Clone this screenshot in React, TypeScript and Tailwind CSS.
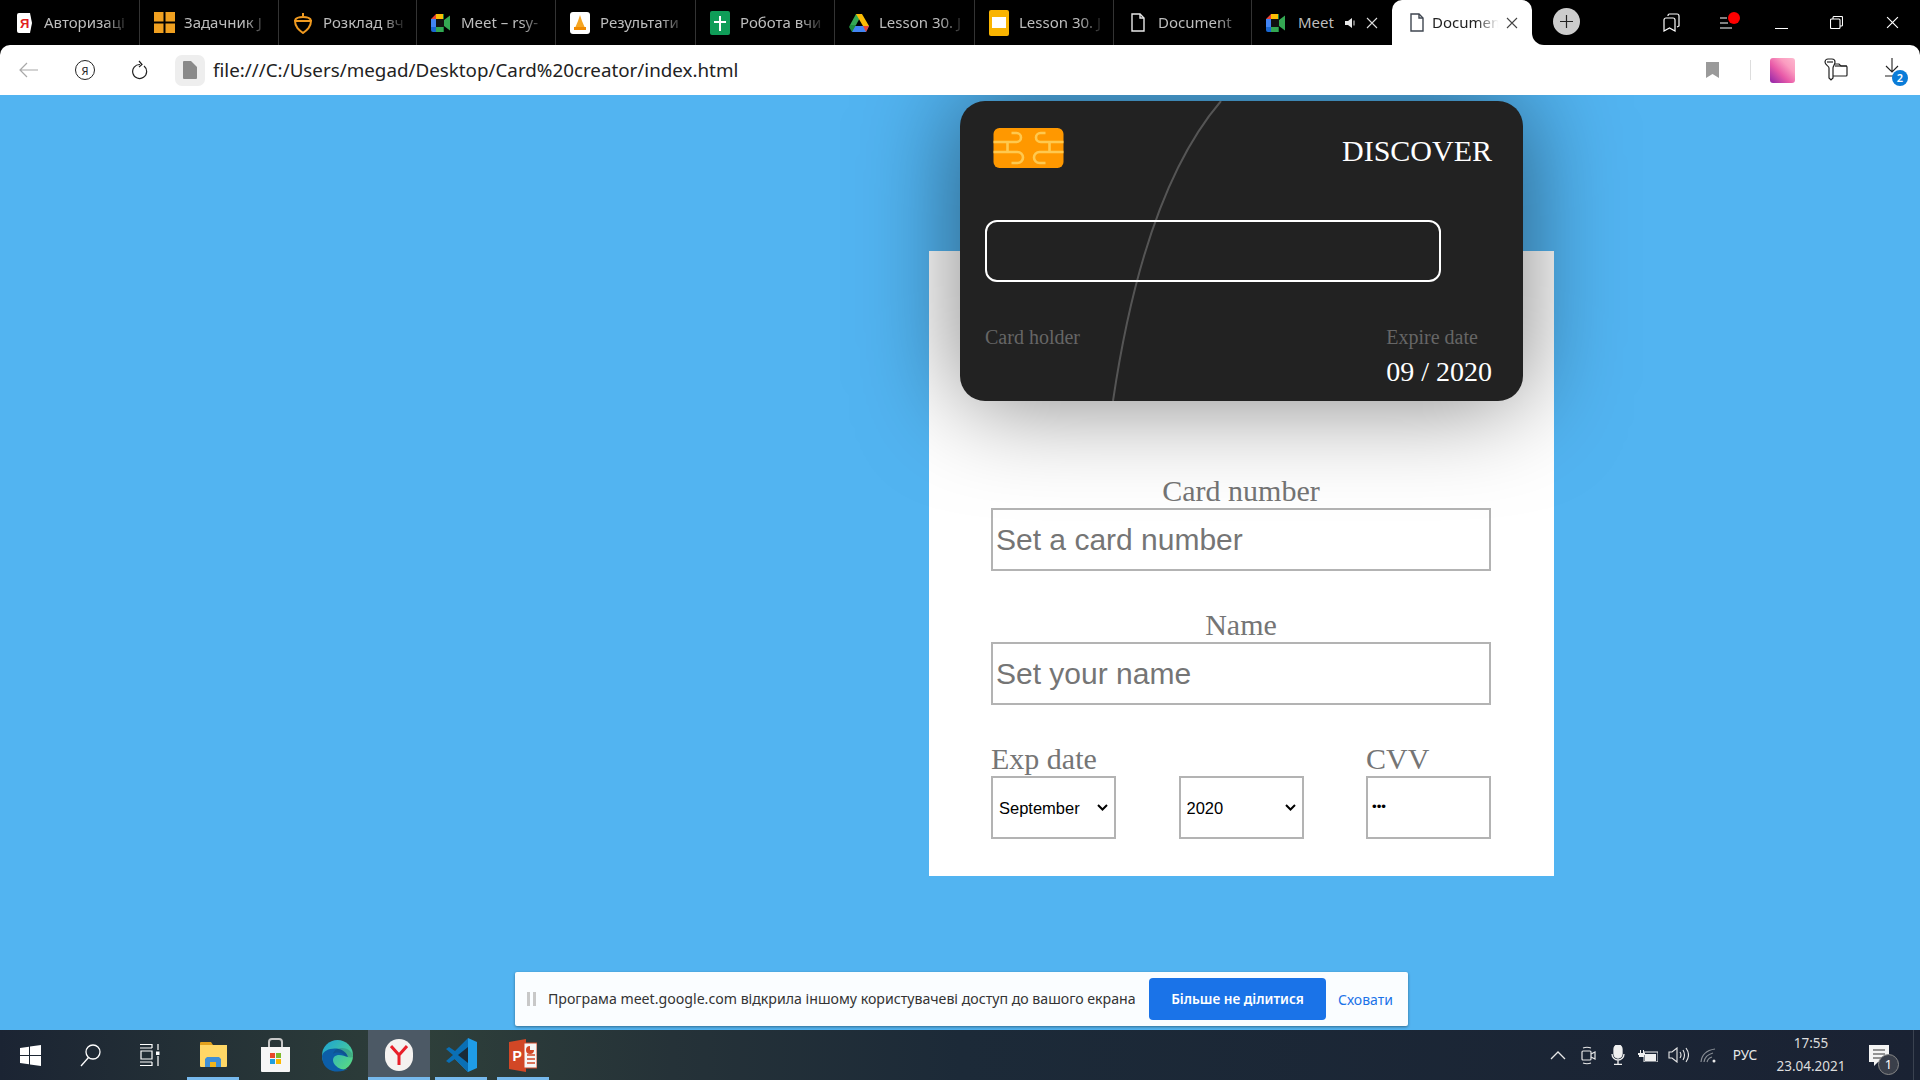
import type { ReactNode } from 'react'

const MeetIcon = () => (
  <svg width="20" height="18" viewBox="0 0 20 18">
    <path d="M0 5 5 0h8v5H5v8H0z" fill="#ea4335" />
    <path d="M5 0h8v5H5z" fill="#fbbc04" />
    <path d="M0 5h5v8H0z" fill="#4285f4" />
    <path d="M0 13h5v5H2a2 2 0 0 1-2-2z" fill="#1967d2" />
    <path d="M5 13h8v5H5z" fill="#34a853" />
    <path d="M13 6l6-4.500v15l-6-4.500z" fill="#34a853" />
    <path d="M13 0v18h-1V0z" fill="#188038" />
    <path d="M5 5h8v8H5z" fill="#111" />
  </svg>
)

const DocIcon = ({ color = '#e8e8e8' }: { color?: string }) => (
  <svg width="14" height="19" viewBox="0 0 14 19" fill="none" stroke={color} strokeWidth="1.400">
    <path d="M1 1h8l4 4v13H1z" />
    <path d="M9 1v4h4" />
  </svg>
)

const CloseIcon = ({ color = '#ddd', size = 12 }: { color?: string; size?: number }) => (
  <svg width={size} height={size} viewBox="0 0 12 12" stroke={color} strokeWidth="1.100">
    <path d="M1 1l10 10M11 1L1 11" />
  </svg>
)

const Chevron = () => (
  <svg className="absolute right-[8px] top-[28px] pointer-events-none" width="11" height="7" viewBox="0 0 11 7" fill="none" stroke="#000" strokeWidth="2">
    <path d="M1 1l4.500 4.500L10 1" />
  </svg>
)

type TabProps = {
  icon: ReactNode
  title: string
  width?: string
  end?: ReactNode
}

function Tab({ icon, title, width = 'w-[139px]', end }: TabProps) {
  return (
    <div className={`${width} h-[45px] flex items-center border-r border-[#333] shrink-0 pl-[13px] pr-[8px]`}>
      <div className="w-[22px] flex justify-center shrink-0">{icon}</div>
      <span className="ml-[9px] flex-1 overflow-hidden whitespace-nowrap text-[15px] text-[#bdbdbd] [mask-image:linear-gradient(to_right,black_70%,transparent)]">
        {title}
      </span>
      {end}
    </div>
  )
}

function TabBar() {
  return (
    <div className="h-[45px] bg-black flex items-start shrink-0 [font-family:'Noto_Sans',sans-serif]">
      <Tab
        title="Авторизаці"
        width="w-[140px]"
        icon={
          <svg width="15" height="20" viewBox="0 0 15 20">
            <path d="M0 2a2 2 0 0 1 2-2h11l2 10-2 10H2a2 2 0 0 1-2-2z" fill="#fff" />
            <text x="3" y="15" fontSize="13" fontFamily="Liberation Sans" fontWeight="700" fill="#e02020">Я</text>
          </svg>
        }
      />
      <Tab
        title="Задачник J"
        icon={
          <svg width="21" height="21" viewBox="0 0 21 21" fill="#f0a020">
            <rect width="9.500" height="9.500" />
            <rect x="11.500" width="9.500" height="9.500" />
            <rect y="11.500" width="9.500" height="9.500" />
            <rect x="11.500" y="11.500" width="9.500" height="9.500" />
          </svg>
        }
      />
      <Tab
        title="Розклад вч"
        width="w-[138px]"
        icon={
          <svg width="20" height="22" viewBox="0 0 20 22" fill="none" stroke="#f09a20" strokeWidth="2">
            <path d="M2 8c2-4 14-4 16 0" />
            <path d="M2 9h16c0 6-4 9-8 12-4-3-8-6-8-12z" />
            <path d="M10 1v3" />
          </svg>
        }
      />
      <Tab title="Meet – rsy-" icon={<MeetIcon />} />
      <Tab
        title="Результати"
        width="w-[140px]"
        icon={
          <svg width="20" height="22" viewBox="0 0 20 22">
            <rect width="20" height="22" rx="3" fill="#fff" />
            <path d="M10 3l2 6 3 7H5l3-7z" fill="#f5a623" />
            <rect x="4" y="15" width="12" height="3" fill="#f08a00" />
          </svg>
        }
      />
      <Tab
        title="Робота вчи"
        icon={
          <svg width="20" height="24" viewBox="0 0 20 24">
            <rect width="20" height="24" rx="2" fill="#0f9d58" />
            <path d="M9 5h2v5h5v2h-5v8H9v-8H4v-2h5z" fill="#fff" />
          </svg>
        }
      />
      <Tab
        title="Lesson 30. J"
        width="w-[140px]"
        icon={
          <svg width="20" height="18" viewBox="0 0 20 18">
            <path d="M7 0h6l-6 11H1z" fill="#34a853" transform="translate(0 0)" />
            <path d="M7 0h6l7 12h-6z" fill="#fbbc04" />
            <path d="M4 12h16l-3 6H3z" fill="#4285f4" />
            <path d="M14 12h6l-3 6z" fill="#ea4335" />
            <path d="M1 11h6l-4 7-3-5z" fill="#1e8e3e" />
          </svg>
        }
      />
      <Tab
        title="Lesson 30. J"
        icon={
          <svg width="20" height="26" viewBox="0 0 20 26">
            <rect width="20" height="26" rx="2" fill="#f9b400" />
            <rect x="3" y="7" width="14" height="11" fill="#fff" />
          </svg>
        }
      />
      <Tab title="Document" width="w-[138px]" icon={<DocIcon />} />
      <div className="w-[140px] h-[45px] flex items-center shrink-0 pl-[13px] pr-[14px] rounded-br-[10px] bg-black">
        <div className="w-[22px] flex justify-center shrink-0">
          <MeetIcon />
        </div>
        <span className="ml-[11px] flex-1 whitespace-nowrap text-[15px] text-[#bdbdbd]">Meet</span>
        <svg className="ml-[6px]" width="12" height="12" viewBox="0 0 12 12" fill="#e8e8e8">
          <path d="M0 4h3l4-3v10L3 8H0z" />
          <path d="M8.500 3.500v5h1v-5z" />
        </svg>
        <div className="ml-[9px]">
          <CloseIcon />
        </div>
      </div>

      <div className="relative w-[140px] h-[45px] bg-white rounded-t-[10px] flex items-center shrink-0 pl-[18px] pr-[14px]">
        <DocIcon color="#3f4650" />
        <span className="ml-[8px] flex-1 overflow-hidden whitespace-nowrap text-[15px] text-[#222] [mask-image:linear-gradient(to_right,black_60%,transparent_90%)]">
          Document
        </span>
        <CloseIcon color="#444" />
        <div className="absolute -right-[12px] bottom-0 w-[12px] h-[12px] bg-white">
          <div className="w-full h-full bg-black rounded-bl-[12px]" />
        </div>
      </div>

      <div className="ml-[21px] mt-[8px] w-[27px] h-[27px] rounded-full bg-[#cccccc] flex items-center justify-center">
        <svg width="13" height="13" viewBox="0 0 13 13" stroke="#222" strokeWidth="1.200">
          <path d="M6.500 0v13M0 6.500h13" />
        </svg>
      </div>

      <div className="ml-auto flex h-[45px]">
        <div className="w-[55px] flex items-center justify-center">
          <svg width="17" height="19" viewBox="0 0 17 19" fill="none" stroke="#fff" strokeWidth="1.200">
            <path d="M1 18V7a2 2 0 0 1 2-2h7a2 2 0 0 1 2 2v11l-5.500-3z" />
            <path d="M5 3V2.500A1.500 1.500 0 0 1 6.500 1H14a2 2 0 0 1 2 2v10l-2 1" />
          </svg>
        </div>
        <div className="relative w-[55px] flex items-center justify-center">
          <svg width="13" height="12" viewBox="0 0 13 12" stroke="#fff" strokeWidth="1.100">
            <path d="M0 1h7M0 6h8M0 11h12" />
          </svg>
          <div className="absolute left-[29px] top-[12px] w-[12px] h-[12px] rounded-full bg-[#ff0000]" />
        </div>
        <div className="w-[55px] flex items-center justify-center pt-[12px]">
          <div className="w-[13px] h-px bg-white" />
        </div>
        <div className="w-[55px] flex items-center justify-center">
          <svg width="13" height="13" viewBox="0 0 13 13" fill="none" stroke="#fff" strokeWidth="1.100">
            <rect x="0.500" y="3" width="9.500" height="9.500" rx="1" />
            <path d="M3 3V1.500a1 1 0 0 1 1-1h7.500a1 1 0 0 1 1 1V9a1 1 0 0 1-1 1H10" />
          </svg>
        </div>
        <div className="w-[56px] flex items-center justify-center">
          <CloseIcon color="#fff" size={13} />
        </div>
      </div>
    </div>
  )
}

function Toolbar() {
  return (
    <div className="h-[50px] bg-black shrink-0 relative z-10">
      <div className="h-full bg-white rounded-t-[10px] flex items-center [font-family:'Noto_Sans',sans-serif]">
        <div className="w-[57px] flex justify-center">
          <svg width="19" height="16" viewBox="0 0 19 16" fill="none" stroke="#a8a8a8" strokeWidth="1.200">
            <path d="M19 8H1M8 1 1 8l7 7" />
          </svg>
        </div>
        <div className="w-[56px] flex justify-center">
          <div className="w-[20px] h-[20px] rounded-full border border-[#222] flex items-center justify-center text-[11px] leading-none text-[#222]">
            Я
          </div>
        </div>
        <div className="w-[54px] flex justify-center">
          <svg width="16" height="20" viewBox="0 0 16 20" fill="none" stroke="#222" strokeWidth="1.200">
            <path d="M12 6a7 7 0 1 1-4-1.500" />
            <path d="M7 1l3 3.500L7 7" />
          </svg>
        </div>
        <div className="ml-[8px] w-[30px] h-[31px] rounded-[7px] bg-[#eeeeee] flex items-center justify-center">
          <svg width="14" height="18" viewBox="0 0 14 18">
            <path d="M0 1a1 1 0 0 1 1-1h7l6 6v11a1 1 0 0 1-1 1H1a1 1 0 0 1-1-1z" fill="#8a8a8a" />
          </svg>
        </div>
        <span className="ml-[8px] pt-[1px] text-[18.800px] text-[#222] whitespace-nowrap">
          file:///C:/Users/megad/Desktop/Card%20creator/index.html
        </span>
        <div className="ml-auto flex items-center pr-[15px]">
          <svg width="13" height="16" viewBox="0 0 13 16" fill="#9a9a9a">
            <path d="M0 0h13v16l-6.500-4L0 16z" />
          </svg>
          <div className="ml-[31px] w-px h-[20px] bg-[#dddddd]" />
          <div className="ml-[19px] w-[25px] h-[25px] rounded-[3px] bg-[linear-gradient(to_top_right,#8e24aa_0%,#e85aa8_40%,#fb9cc0_70%,#fdb8cf_100%)]" />
          <svg className="ml-[29px]" width="24" height="24" viewBox="0 0 24 24" fill="none" stroke="#222" strokeWidth="1.200">
            <path d="M1 4a3 3 0 0 1 3-3h4a3 3 0 0 1 3 3c0 3-2 4-2 6v10l-2 2-2-2V10C5 8 1 7 1 4z" />
            <path d="M3 4h6" />
            <path d="M11 6h4l2 2h5a1 1 0 0 1 1 1v8a1 1 0 0 1-1 1H9" />
            <path d="M11 8h12" />
          </svg>
          <div className="relative ml-[37px] w-[20px] h-[24px]">
            <svg width="16" height="20" viewBox="0 0 16 20" fill="none" stroke="#222" strokeWidth="1.100">
              <path d="M7 0v14M1 8l6 6 6-6M0 18h10" />
            </svg>
            <div className="absolute left-[7px] top-[12px] w-[16px] h-[16px] rounded-full bg-[#0a7cd8] text-white text-[11px] font-semibold leading-[16px] text-center">
              2
            </div>
          </div>
        </div>
      </div>
    </div>
  )
}

function Chip() {
  return (
    <svg className="ml-[8px]" width="71" height="40" viewBox="0 0 70 40" fill="none">
      <rect width="70" height="40" rx="6" fill="#ff9800" />
      <g stroke="#ffc94f" strokeWidth="2.600">
        <path d="M18 5h5a4.500 4.500 0 0 1 0 9H0M0 24h24a5.500 5.500 0 0 1 0 11h-6M14 14v10" />
        <path d="M52 5h-5a4.500 4.500 0 0 0 0 9h23M70 24H46a5.500 5.500 0 0 0 0 11h6M56 14v10" />
      </g>
    </svg>
  )
}

function CreditCard() {
  return (
    <div className="absolute left-[31px] -top-[150px] w-[563px] h-[300px] rounded-[25px] bg-[#222222] shadow-[0_0_100px_rgba(0,0,0,0.5)] overflow-hidden pt-[27px] pl-[25px] pr-[31px]">
      <svg className="absolute inset-0" width="563" height="300" fill="none">
        <path d="M261 0Q184 90 153 300" stroke="#555555" strokeWidth="2" />
      </svg>
      <div className="relative flex justify-between h-[40px]">
        <Chip />
        <span className="mt-[6px] text-[30px] text-white">DISCOVER</span>
      </div>
      <div className="relative mt-[52px] w-[456px] h-[62px] rounded-[12px] border-2 border-white" />
      <div className="relative mt-[44px] flex justify-between">
        <span className="text-[20px] text-[#666666]">Card holder</span>
        <div className="flex flex-col">
          <span className="text-[20px] text-[#666666]">Expire date</span>
          <span className="mt-[7px] text-[28px] text-white">09 / 2020</span>
        </div>
      </div>
    </div>
  )
}

function FormPanel() {
  const boxClass = 'w-full h-[63px] border-2 border-[#b3b3b3] bg-white block'
  const labelClass = 'text-[30px] text-[#757575]'
  const selectClass = `${boxClass} appearance-none pl-[6px] text-[16.500px] text-black [font-family:'Liberation_Sans',sans-serif]`

  return (
    <div className="relative ml-[929px] mt-[156px] w-[625px] h-[625px] bg-white pl-[62px] pr-[63px] pt-[223px] flex flex-col gap-[37px] leading-[normal] [font-family:'Liberation_Serif',serif]">
      <CreditCard />
      <div className="flex flex-col items-center">
        <label className={labelClass}>Card number</label>
        <input
          placeholder="Set a card number"
          className={`${boxClass} px-[3px] text-[30px] [font-family:'Liberation_Sans',sans-serif] placeholder:text-[#757575]`}
        />
      </div>
      <div className="flex flex-col items-center">
        <label className={labelClass}>Name</label>
        <input
          placeholder="Set your name"
          className={`${boxClass} px-[3px] text-[30px] [font-family:'Liberation_Sans',sans-serif] placeholder:text-[#757575]`}
        />
      </div>
      <div className="flex justify-between">
        <div className="flex flex-col w-[125px]">
          <label className={labelClass}>Exp date</label>
          <div className="relative">
            <select defaultValue="September" className={selectClass}>
              <option>August</option>
              <option>September</option>
              <option>October</option>
            </select>
            <Chevron />
          </div>
        </div>
        <div className="flex flex-col justify-end w-[125px]">
          <div className="relative">
            <select defaultValue="2020" className={selectClass}>
              <option>2020</option>
              <option>2021</option>
            </select>
            <Chevron />
          </div>
        </div>
        <div className="flex flex-col w-[125px]">
          <label className={labelClass}>CVV</label>
          <input
            type="password"
            defaultValue="123"
            className={`${boxClass} px-[4px] pb-[3px] text-[13.330px] text-black [font-family:'Liberation_Sans',sans-serif]`}
          />
        </div>
      </div>
    </div>
  )
}

function ShareBar() {
  return (
    <div className="absolute bottom-[4px] left-[515px] w-[893px] h-[54px] bg-[#fafdff] rounded-[2px] shadow-[0_1px_3px_rgba(0,0,0,0.4)] flex items-center pl-[12px] [font-family:'Noto_Sans',sans-serif]">
      <div className="flex gap-[3px]">
        <div className="w-[3px] h-[14px] bg-[#c8c8c8]" />
        <div className="w-[3px] h-[14px] bg-[#c8c8c8]" />
      </div>
      <span className="ml-[12px] w-[588px] text-[14.150px] text-[#333] whitespace-nowrap">
        Програма meet.google.com відкрила іншому користувачеві доступ до вашого екрана
      </span>
      <button className="ml-[13px] w-[177px] h-[42px] rounded-[4px] bg-[#1a73e8] text-white text-[13.600px] font-semibold">
        Більше не ділитися
      </button>
      <span className="ml-[12px] text-[14px] text-[#1a73e8]">Сховати</span>
    </div>
  )
}

function TaskSlot({ children, active, open }: { children: ReactNode; active?: boolean; open?: boolean }) {
  return (
    <div className={`relative w-[62px] h-full flex items-center justify-center ${active ? 'bg-[#4c5965]' : ''}`}>
      {children}
      {open && (
        <div className={`absolute bottom-0 h-[3px] bg-[#76b9ed] ${active ? 'inset-x-0' : 'inset-x-[5px]'}`} />
      )}
    </div>
  )
}

function Taskbar() {
  return (
    <div className="h-[50px] shrink-0 flex items-center bg-[linear-gradient(to_right,#1b2433_0%,#2e3f3a_22%,#253238_35%,#1c2a38_50%,#1a2233_100%)] text-[#e4e4e4] [font-family:'Noto_Sans',sans-serif]">
      <div className="w-[60px] h-full flex items-center justify-center">
        <svg width="21" height="21" viewBox="0 0 21 21" fill="#fff">
          <path d="M0 3l9-1.300V10H0zM10 1.500 21 0v10H10zM0 11h9v8.300L0 18zM10 11h11v10l-11-1.500z" />
        </svg>
      </div>
      <div className="w-[60px] h-full flex items-center justify-center">
        <svg width="21" height="24" viewBox="0 0 21 24" fill="none" stroke="#fff" strokeWidth="1.300">
          <circle cx="13" cy="9" r="7" />
          <path d="M8.500 14.500 1 23" />
        </svg>
      </div>
      <div className="w-[60px] h-full flex items-center justify-center">
        <svg width="20" height="22" viewBox="0 0 20 22" fill="none" stroke="#fff" strokeWidth="1.200">
          <path d="M0 .5h12M0 21.500h12M0 4h12M0 18h12M12 0v4M12 18v4M1 7h11v8H1zM18 0v6M18 12v10" />
          <rect x="16" y="7.500" width="3.500" height="3.500" fill="#fff" stroke="none" />
        </svg>
      </div>
      <div className="ml-[2px] flex h-full">
        <TaskSlot open>
          <svg width="27" height="26" viewBox="0 0 27 26">
            <path d="M0 1a1 1 0 0 1 1-1h10l2 3H0z" fill="#e2a11c" />
            <path d="M0 3h27v21a1 1 0 0 1-1 1H1a1 1 0 0 1-1-1z" fill="#ffd766" />
            <path d="M5 25v-8l2-2h12l2 2v8h-5v-5h-6v5z" fill="#3f8fd6" />
            <rect x="10" y="20" width="6" height="5" fill="#f2b51b" />
          </svg>
        </TaskSlot>
        <TaskSlot>
          <svg width="29" height="34" viewBox="0 0 29 34">
            <path d="M8 9V4a3 3 0 0 1 3-3h7a3 3 0 0 1 3 3v5" fill="none" stroke="#c8c8c8" strokeWidth="2" />
            <path d="M0 9h29v24a1 1 0 0 1-1 1H1a1 1 0 0 1-1-1z" fill="#f6f6f6" />
            <rect x="9" y="15" width="5" height="5" fill="#e8472b" />
            <rect x="15" y="15" width="5" height="5" fill="#7db92d" />
            <rect x="9" y="21" width="5" height="5" fill="#1f9fe0" />
            <rect x="15" y="21" width="5" height="5" fill="#fbb700" />
          </svg>
        </TaskSlot>
        <TaskSlot>
          <svg width="31" height="33" viewBox="0 0 31 33">
            <defs>
              <linearGradient id="edgeTop" x1="0" y1="0" x2="1" y2="1">
                <stop offset="0" stopColor="#1aa0d8" />
                <stop offset="1" stopColor="#5fe07a" />
              </linearGradient>
            </defs>
            <circle cx="15.500" cy="16.500" r="15.500" fill="url(#edgeTop)" />
            <path d="M0 17C2 8 22 6 26 18c-4-1-10-4-14 0-3 4 1 10 7 12 4 1 7 0 8-1-7 6-27 6-27-12z" fill="#0c5ea8" />
            <path d="M31 18c0-5-5-9-11-9-4 0-8 2-9 6 3-2 8-2 11 1 2 2 6 3 9 2z" fill="#1f2e3a" opacity="0.2" />
          </svg>
        </TaskSlot>
        <TaskSlot active open>
          <div className="w-[28px] h-[32px] rounded-full bg-[#f4f2f0] flex items-center justify-center">
            <svg width="18" height="20" viewBox="0 0 18 20" fill="none" stroke="#e8202a" strokeWidth="3">
              <path d="M1 1l8 9 8-9M9 10v10" />
            </svg>
          </div>
        </TaskSlot>
        <TaskSlot open>
          <svg width="31" height="34" viewBox="0 0 31 34">
            <path d="M22 0l9 4v26l-9 4-13-13 13-9z" fill="#1f9ce8" />
            <path d="M22 0v34L9 21l-6 4-3-2 7-6-7-6 3-2 6 4z" fill="#0a6fb5" />
            <path d="M22 9v16l-10-8z" fill="#1a2a38" />
          </svg>
        </TaskSlot>
        <TaskSlot open>
          <svg width="28" height="33" viewBox="0 0 28 33">
            <path d="M0 3l17-3v33L0 30z" fill="#d24726" />
            <rect x="15" y="4" width="13" height="25" fill="#f6f6f6" stroke="#d24726" strokeWidth="1" />
            <path d="M18 16h8M18 20h8M18 24h8" stroke="#d24726" strokeWidth="1.500" />
            <path d="M21 7a4 4 0 1 0 4 4h-4z" fill="#d24726" />
            <text x="3.500" y="22" fontSize="14" fontWeight="700" fontFamily="Liberation Sans" fill="#fff">P</text>
          </svg>
        </TaskSlot>
      </div>

      <div className="ml-auto h-full flex items-center">
        <div className="w-[30px] flex justify-center">
          <svg width="16" height="9" viewBox="0 0 16 9" fill="none" stroke="#e8e8e8" strokeWidth="1.300">
            <path d="M1 8l7-7 7 7" />
          </svg>
        </div>
        <div className="w-[31px] flex justify-center">
          <svg width="15" height="19" viewBox="0 0 15 19" fill="none" stroke="#e8e8e8" strokeWidth="1.200">
            <rect x="1" y="5" width="9" height="9" rx="1" />
            <path d="M10 8l4-2v7l-4-2M2 2q4-1.500 8 0M2 17q4 1.500 8 0" />
          </svg>
        </div>
        <div className="w-[28px] flex justify-center">
          <svg width="14" height="20" viewBox="0 0 14 20" fill="none" stroke="#f0f0f0" strokeWidth="1.300">
            <rect x="3" y="0" width="8" height="13" rx="4" fill="#f0f0f0" />
            <path d="M1 9a6 6 0 0 0 12 0M7 15v4M3 19.500h8" />
          </svg>
        </div>
        <div className="w-[31px] flex justify-center">
          <svg width="20" height="13" viewBox="0 0 20 13" fill="#f0f0f0">
            <path d="M0 4h2V1h1v3h2V1h1v3h1v2H6v2H1V6H0z" />
            <path d="M6 3h14v10H6z" fill="none" stroke="#f0f0f0" />
            <path d="M7 5h11v7H7z" />
          </svg>
        </div>
        <div className="w-[30px] flex justify-center">
          <svg width="21" height="16" viewBox="0 0 21 16" fill="none" stroke="#e8e8e8" strokeWidth="1.100">
            <path d="M1 5h3l5-4v14l-5-4H1z" />
            <path d="M12 5q2 3 0 6M15 3q3 5 0 10M18 1q5 7 0 14" />
          </svg>
        </div>
        <div className="w-[30px] flex justify-center">
          <svg width="17" height="15" viewBox="0 0 17 15" fill="none" stroke="#8a8f96" strokeWidth="1.200">
            <path d="M1 14Q2 3 15 1M4 14q1-7 9-9M7 14q1-4 5-5" />
            <circle cx="14" cy="13" r="1.500" fill="#e8e8e8" stroke="none" />
          </svg>
        </div>
        <span className="w-[44px] text-center text-[13.500px] text-[#e8e8e8]">РУС</span>
        <div className="w-[88px] flex flex-col items-center text-[13.500px] leading-[23px] text-[#dddddd]">
          <span>17:55</span>
          <span>23.04.2021</span>
        </div>
        <div className="relative w-[65px] h-full flex items-center pl-[14px]">
          <svg width="20" height="21" viewBox="0 0 20 21">
            <path d="M0 0h20v17H9l-4 4v-4H0z" fill="#f4f4f4" />
            <path d="M4 5h12M4 9h12M4 13h9" stroke="#333" strokeWidth="1" />
          </svg>
          <div className="absolute left-[23px] top-[24px] w-[21px] h-[21px] rounded-full border border-[#888] bg-[#3a3f4a] text-[13px] leading-[19px] text-center text-white">
            1
          </div>
          <div className="absolute right-[6px] inset-y-0 w-px bg-[#3a4250]" />
        </div>
      </div>
    </div>
  )
}

export default function App() {
  return (
    <div className="w-[1920px] h-[1080px] flex flex-col overflow-hidden">
      <TabBar />
      <Toolbar />
      <main className="relative flex-1 bg-[#52b4f1] overflow-hidden">
        <FormPanel />
        <ShareBar />
      </main>
      <Taskbar />
    </div>
  )
}
